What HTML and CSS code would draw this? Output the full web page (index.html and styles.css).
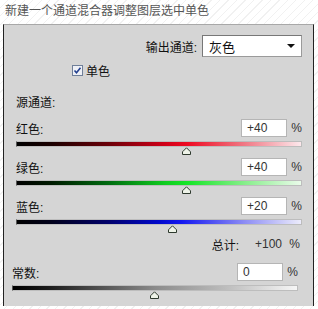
FILE: index.html
```html
<!DOCTYPE html>
<html lang="zh">
<head>
    <meta charset="UTF-8">
    <title>通道混合器</title>
    <link rel="stylesheet" href="styles.css">
</head>
<body>
    <p class="caption">新建一个通道混合器调整图层选中单色</p>

    <div class="panel">
        <div class="output-row">
            <span>输出通道:</span>
            <div class="select">
                <span>灰色</span>
                <span class="arrow"></span>
            </div>
        </div>

        <div class="mono">
            <svg class="check" width="11" height="11" viewBox="0 0 11 11">
                <rect x="0.5" y="0.5" width="10" height="10" fill="#eef0f6" stroke="#6f7f99"/>
                <path d="M2.5 5.5 L4.5 7.8 L8.5 2.8" fill="none" stroke="#23408f" stroke-width="1.6"/>
            </svg>
            <span>单色</span>
        </div>

        <div class="channels">
            <div class="heading">源通道:</div>

            <div class="channel">
                <div class="channel-head">
                    <span class="name">红色:</span>
                    <span class="value">+40</span>
                    <span class="pct">%</span>
                </div>
                <div class="bar red">
                    <svg class="thumb" style="left: 60%" width="9" height="8" viewBox="0 0 9 8">
                        <path d="M4.5 0.8 L8.5 4.8 L8.5 7.5 L0.5 7.5 L0.5 4.8 Z" fill="#eef3e8" stroke="#2e3a2e"/>
                    </svg>
                </div>
            </div>

            <div class="channel">
                <div class="channel-head">
                    <span class="name">绿色:</span>
                    <span class="value">+40</span>
                    <span class="pct">%</span>
                </div>
                <div class="bar green">
                    <svg class="thumb" style="left: 60%" width="9" height="8" viewBox="0 0 9 8">
                        <path d="M4.5 0.8 L8.5 4.8 L8.5 7.5 L0.5 7.5 L0.5 4.8 Z" fill="#eef3e8" stroke="#2e3a2e"/>
                    </svg>
                </div>
            </div>

            <div class="channel">
                <div class="channel-head">
                    <span class="name">蓝色:</span>
                    <span class="value">+20</span>
                    <span class="pct">%</span>
                </div>
                <div class="bar blue">
                    <svg class="thumb" style="left: 55%" width="9" height="8" viewBox="0 0 9 8">
                        <path d="M4.5 0.8 L8.5 4.8 L8.5 7.5 L0.5 7.5 L0.5 4.8 Z" fill="#eef3e8" stroke="#2e3a2e"/>
                    </svg>
                </div>
            </div>

            <div class="total">
                <span class="total-label">总计:</span>
                <span class="total-value">+100</span>
                <span class="pct">%</span>
            </div>
        </div>

        <div class="channels constant">
            <div class="channel">
                <div class="channel-head">
                    <span class="name">常数:</span>
                    <span class="value">0</span>
                    <span class="pct">%</span>
                </div>
                <div class="bar gray">
                    <svg class="thumb" style="left: 50%" width="9" height="8" viewBox="0 0 9 8">
                        <path d="M4.5 0.8 L8.5 4.8 L8.5 7.5 L0.5 7.5 L0.5 4.8 Z" fill="#eef3e8" stroke="#2e3a2e"/>
                    </svg>
                </div>
            </div>
        </div>
    </div>
</body>
</html>
```

FILE: styles.css
```css
body {
    margin: 0;
    height: 309px;
    font-family: "Liberation Sans", "Noto Sans CJK SC", sans-serif;
    font-size: 12px;
    color: #111;
    background: repeating-linear-gradient(135deg, #ffffff 0 5px, #f1f1f1 5px 6px);
}

.caption {
    margin: 0;
    height: 24px;
    padding-left: 5px;
    line-height: 20px;
    color: #555;
    font-family: "Noto Sans CJK SC", sans-serif;
}

.panel {
    margin-left: 3px;
    width: 309px;
    height: 281px;
    background: #d5d5d5;
    border-top: 1px solid #a8a8a8;
    border-left: 1px solid #222;
    border-right: 1px solid #222;
}

.output-row {
    display: flex;
    justify-content: flex-end;
    align-items: center;
    gap: 5px;
    margin-top: 10px;
    padding-right: 11px;
}

.select {
    width: 86px;
    height: 20px;
    display: flex;
    align-items: center;
    justify-content: space-between;
    padding: 0 6px;
    background: #fff;
    border: 1px solid #9a9a9a;
    border-top-color: #777;
    border-left-color: #777;
    font-size: 13px;
}

.arrow {
    width: 0;
    height: 0;
    border-left: 4px solid transparent;
    border-right: 4px solid transparent;
    border-top: 4px solid #111;
}

.mono {
    display: flex;
    align-items: center;
    gap: 3px;
    margin-top: 6px;
    padding-left: 68px;
    height: 14px;
}

.channels {
    padding: 0 11px 0 12px;
}

.heading {
    margin-top: 19px;
    height: 14px;
    line-height: 14px;
}

.channel {
    margin-top: 9px;
}

.channel + .channel {
    margin-top: 11px;
}

.channel-head {
    display: flex;
    align-items: center;
    height: 18px;
}

.name {
    flex: 1;
}

.value {
    width: 39px;
    height: 16px;
    line-height: 16px;
    padding-left: 5px;
    background: #fff;
    border: 1px solid #b5b5b5;
    color: #333;
}

.pct {
    width: 15px;
    text-align: right;
    color: #333;
}

.bar {
    position: relative;
    margin-top: 4px;
    height: 6px;
    border: 1px solid #bdbdbd;
    border-left-color: #555;
    box-sizing: border-box;
}

.thumb {
    position: absolute;
    top: 5px;
    margin-left: -5px;
}

.red {
    background: linear-gradient(to right, #000 0%, #1a0000 12%, #6a0008 32%, #d00018 52%, #ee0a22 60%, #f07884 80%, #fde8ec 100%);
}

.green {
    background: linear-gradient(to right, #000 0%, #001a00 12%, #006a10 32%, #10cc20 52%, #16e628 60%, #86ee8a 80%, #eafbea 100%);
}

.blue {
    background: linear-gradient(to right, #000 0%, #00001a 12%, #00006a 32%, #0008cc 50%, #1418f0 58%, #8c8cf4 80%, #ececfb 100%);
}

.gray {
    background: linear-gradient(to right, #000 0%, #1a1a1a 12%, #555 32%, #8a8a8a 50%, #bdbdbd 75%, #f6f6f6 100%);
}

.total {
    display: flex;
    justify-content: flex-end;
    align-items: center;
    margin-top: 12px;
    height: 14px;
    padding-right: 2px;
}

.total-label {
    margin-right: 16px;
}

.total-value {
    color: #333;
}

.total .pct {
    width: 18px;
}

.constant {
    padding: 0 15px 0 8px;
}

.constant .channel {
    margin-top: 12px;
}
```
